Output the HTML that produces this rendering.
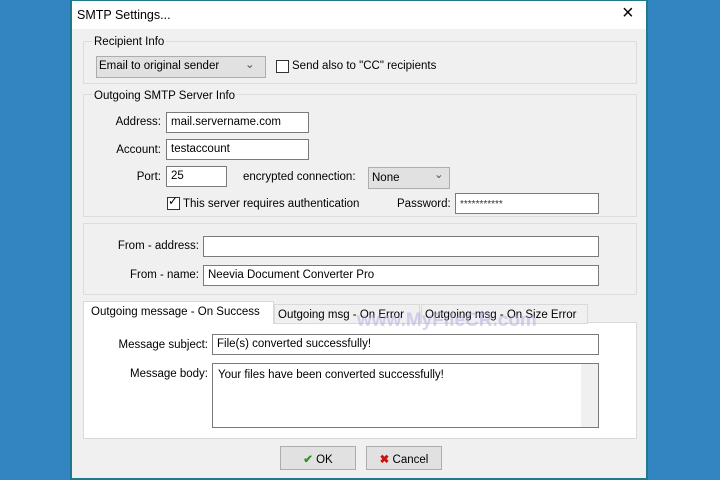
<!DOCTYPE html>
<html><head><style>
*{box-sizing:border-box}
body{margin:0;width:720px;height:480px;background:#3385c1;position:relative;overflow:hidden;font-family:"Liberation Sans",sans-serif;font-size:11.5px;color:#000}
.a{position:absolute;white-space:nowrap}
#dlg{position:absolute;left:70px;top:-2px;width:578px;height:482px;background:#f0f0f0;border:2px solid #1f7a8c;border-top:3px solid #1f7a8c}
#title{position:absolute;left:0;top:0;width:574px;height:28px;background:#fff}
.grp{position:absolute;border:1px solid #dcdcdc}
.in{position:absolute;background:#fff;border:1px solid #7a7a7a;height:21px;padding:3px 0 0 4px;white-space:nowrap}
.lbl{position:absolute;white-space:nowrap;text-align:right}
.cb{position:absolute;width:13px;height:13px;border:1px solid #333;background:#fff}
.btn{position:absolute;height:24px;border:1px solid #adadad;background:#e1e1e1;text-align:center;padding-top:5px}
.tab{position:absolute;border:1px solid #d9d9d9;background:#f0f0f0;padding:4px 3px;white-space:nowrap}
</style></head><body>
<div id="dlg">
<div id="title"></div>
<div class="a" style="left:5px;top:7px;font-size:12.5px">SMTP Settings...</div>
<div class="a" style="left:550px;top:1px;font-size:20px;font-weight:300">×</div>

<div class="grp" style="left:11px;top:40px;width:554px;height:43px"></div>
<div class="a" style="left:20px;top:35px;background:#f0f0f0;padding:0 2px">Recipient Info</div>
<div class="a" style="left:24px;top:55px;width:170px;height:22px;border:1px solid #adadad;background:#e1e1e1"></div>
<div class="a" style="left:27px;top:59px">Email to original sender</div>
<div class="a" style="left:173px;top:56px;color:#555">⌄</div>
<div class="cb" style="left:204px;top:59px"></div>
<div class="a" style="left:220px;top:59px">Send also to "CC" recipients</div>

<div class="grp" style="left:11px;top:93px;width:554px;height:123px"></div>
<div class="a" style="left:20px;top:89px;background:#f0f0f0;padding:0 2px">Outgoing SMTP Server Info</div>
<div class="lbl" style="left:30px;width:59px;top:115px">Address:</div>
<div class="in" style="left:94px;top:111px;width:143px">mail.servername.com</div>
<div class="lbl" style="left:30px;width:59px;top:143px">Account:</div>
<div class="in" style="left:94px;top:138px;width:143px">testaccount</div>
<div class="lbl" style="left:30px;width:59px;top:170px">Port:</div>
<div class="in" style="left:94px;top:165px;width:61px">25</div>
<div class="a" style="left:171px;top:170px">encrypted connection:</div>
<div class="a" style="left:296px;top:166px;width:82px;height:22px;border:1px solid #adadad;background:#e1e1e1;padding:4px 0 0 3px">None</div>
<div class="a" style="left:362px;top:166px;color:#555">⌄</div>
<div class="cb" style="left:95px;top:196px"></div>
<div class="a" style="left:96px;top:193px;font-size:12px">✓</div>
<div class="a" style="left:111px;top:197px">This server requires authentication</div>
<div class="a" style="left:325px;top:197px">Password:</div>
<div class="in" style="left:383px;top:192px;width:144px;font-size:10px;padding-top:5px;color:#333">***********</div>

<div class="grp" style="left:11px;top:222px;width:554px;height:72px"></div>
<div class="lbl" style="left:20px;width:107px;top:239px">From - address:</div>
<div class="in" style="left:131px;top:235px;width:396px"></div>
<div class="lbl" style="left:20px;width:107px;top:268px">From - name:</div>
<div class="in" style="left:131px;top:264px;width:396px">Neevia Document Converter Pro</div>

<div class="a" style="left:11px;top:321px;width:554px;height:117px;background:#fff;border:1px solid #d9d9d9"></div>
<div class="tab" style="left:202px;top:303px;width:146px;height:20px">Outgoing msg - On Error</div>
<div class="tab" style="left:349px;top:303px;width:167px;height:20px">Outgoing msg - On Size Error</div>
<div class="tab" style="left:11px;top:300px;width:191px;height:23px;background:#fff;border-bottom:none;padding-left:7px">Outgoing message - On Success</div>
<div class="a" style="left:285px;top:309px;font-size:19px;font-weight:bold;color:rgba(170,160,220,.45)">www.MyFileCR.com</div>
<div class="lbl" style="left:20px;width:116px;top:338px">Message subject:</div>
<div class="in" style="left:140px;top:333px;width:387px">File(s) converted successfully!</div>
<div class="lbl" style="left:20px;width:116px;top:367px">Message body:</div>
<div class="in" style="left:140px;top:362px;width:387px;height:65px;padding:5px 0 0 5px">Your files have been converted successfully!</div>
<div class="a" style="left:509px;top:363px;width:17px;height:63px;background:#f0f0f0"></div>

<div class="btn" style="left:208px;top:445px;width:76px"><span style="color:#2a9a1a;font-weight:bold">✔</span> OK</div>
<div class="btn" style="left:294px;top:445px;width:76px"><span style="color:#d01010;font-weight:bold">✖</span> Cancel</div>
</div>
</body></html>
